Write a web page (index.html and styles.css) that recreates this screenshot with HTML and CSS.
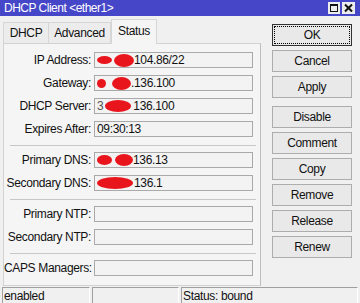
FILE: index.html
```html
<!DOCTYPE html>
<html>
<head>
<meta charset="utf-8">
<link rel="stylesheet" href="styles.css">
</head>
<body>
<div class="window">
  <div class="titlebar">
    <span class="title">DHCP Client &lt;ether1&gt;</span>
    <div class="tbtns">
      <svg class="tbtn" width="12" height="12" viewBox="0 0 12 12"><rect x="0" y="0" width="12" height="12" fill="#ececec"/><rect x="2.5" y="2.5" width="7" height="7" fill="none" stroke="#111" stroke-width="1"/><rect x="2" y="2" width="8" height="2" fill="#111"/></svg>
      <svg class="tbtn" width="13" height="12" viewBox="0 0 13 12"><rect x="0" y="0" width="13" height="12" fill="#ececec"/><path d="M3 2.5 L10 9.5 M10 2.5 L3 9.5" stroke="#111" stroke-width="2"/></svg>
    </div>
  </div>
  <div class="main">
    <div class="left">
      <div class="tabs">
        <div class="tab">DHCP</div>
        <div class="tab">Advanced</div>
        <div class="tab active">Status</div>
      </div>
      <div class="panel">
        <div class="row"><div class="label">IP Address:</div><div class="field"><span class="red r1"></span><span class="red r2"></span>104.86/22</div></div>
        <div class="row"><div class="label">Gateway:</div><div class="field"><span class="red g1"></span><span class="red g2"></span>.136.100</div></div>
        <div class="row"><div class="label">DHCP Server:</div><div class="field"><span class="faint">3</span><span class="red d1"></span>136.100</div></div>
        <div class="row"><div class="label">Expires After:</div><div class="field">09:30:13</div></div>
        <div class="sep"></div>
        <div class="row"><div class="label">Primary DNS:</div><div class="field"><span class="red p1"></span><span class="red p2"></span>136.13</div></div>
        <div class="row"><div class="label">Secondary DNS:</div><div class="field"><span class="red s1"></span>136.1</div></div>
        <div class="sep"></div>
        <div class="row"><div class="label">Primary NTP:</div><div class="field"></div></div>
        <div class="row"><div class="label">Secondary NTP:</div><div class="field"></div></div>
        <div class="sep"></div>
        <div class="row last"><div class="label">CAPS Managers:</div><div class="field"></div></div>
      </div>
    </div>
    <div class="right">
      <div class="btn ok">OK</div>
      <div class="btn">Cancel</div>
      <div class="btn">Apply</div>
      <div class="btn gap">Disable</div>
      <div class="btn">Comment</div>
      <div class="btn">Copy</div>
      <div class="btn">Remove</div>
      <div class="btn">Release</div>
      <div class="btn">Renew</div>
    </div>
  </div>
  <div class="statusbar">
    <div class="cell c1">enabled</div>
    <div class="cell c2"></div>
    <div class="cell c3">Status: bound</div>
  </div>
</div>
</body>
</html>
```
FILE: styles.css
```css
* { box-sizing: border-box; }
html, body { margin: 0; padding: 0; }
body {
  width: 360px;
  height: 303px;
  overflow: hidden;
  background: #f0f0f0;
  font-family: "Liberation Sans", Arial, sans-serif;
  font-size: 12px;
  letter-spacing: -0.35px;
  color: #111;
}
.window { width: 360px; height: 303px; display: flex; flex-direction: column; }
.titlebar {
  height: 16px;
  background: #4646c8;
  display: flex;
  align-items: center;
  justify-content: space-between;
  padding: 0 5px 0 4px;
}
.title { color: #fff; font-size: 12px; line-height: 16px; letter-spacing: -0.5px; }
.tbtns { display: flex; gap: 2px; align-items: center; margin-top: -1px; }
.tbtn { display: block; }

.main { display: flex; height: 271px; }
.left { width: 258px; margin-left: 3px; padding-top: 3px; display: flex; flex-direction: column; }
.tabs { display: flex; align-items: flex-end; height: 25px; position: relative; z-index: 1; margin-bottom: -1px; }
.tab {
  height: 21px;
  border: 1px solid #d6d6d6;
  border-bottom: none;
  background: #ececec;
  padding: 0 4px;
  display: flex;
  align-items: center;
  justify-content: center;
  margin-bottom: 1px;
  white-space: nowrap;
}
.tab:nth-child(1) { width: 46px; }
.tab:nth-child(2) { width: 62px; border-left: none; }
.tab.active {
  width: 46px;
  height: 25px;
  background: #f5f5f5;
  margin-bottom: 0;
  padding-bottom: 2px;
}
.panel {
  width: 258px;
  height: 243px;
  background: #f5f5f5;
  border: 1px solid #d2d2d2;
  border-right-color: #bdbdbd;
  padding: 8px 0 0 0;
  display: flex;
  flex-direction: column;
}
.row { display: flex; align-items: center; height: 16px; margin-bottom: 7px; }
.row.last { margin-bottom: 0; }
.label { width: 87px; text-align: right; white-space: nowrap; line-height: 16px; }
.field {
  margin-left: 3px;
  width: 159px;
  height: 16px;
  border: 1px solid #a9a9a9;
  background: #f3f3f3;
  display: flex;
  align-items: center;
  padding-left: 2px;
  line-height: 14px;
  white-space: nowrap;
}
.sep { height: 1px; background: #c8c8c8; margin: 1px 4px 6px 6px; }
.red { display: inline-block; background: #e8161c; border-radius: 50%; flex: none; }
.r1 { width: 15px; height: 8px; margin-right: 2px; }
.r2 { width: 20px; height: 13px; }
.g1 { width: 9px; height: 9px; margin-right: 6px; }
.g2 { width: 19px; height: 13px; }
.d1 { width: 26px; height: 12px; margin-left: 2px; margin-right: 2px; }
.faint { color: #555; }
.p1 { width: 15px; height: 10px; margin-right: 3px; }
.p2 { width: 18px; height: 12px; }
.s1 { width: 36px; height: 12px; margin-right: 1px; }

.right { width: 80px; margin-left: 11px; padding-top: 8px; display: flex; flex-direction: column; }
.btn {
  height: 22px;
  margin-bottom: 4px;
  border: 1px solid #adadad;
  background: #e9e9e9;
  display: flex;
  align-items: center;
  justify-content: center;
}
.btn.gap { margin-top: 4px; }
.btn.ok { border: 1px solid #333; outline: 1px dotted #000; outline-offset: -3px; }

.statusbar { height: 16px; display: flex; padding-left: 2px; }
.cell {
  height: 16px;
  border-top: 1px solid #a0a0a0;
  border-left: 1px solid #a0a0a0;
  border-right: 1px solid #fff;
  padding-left: 1px;
  line-height: 16px;
  font-size: 12px;
  overflow: hidden;
}
.c1 { width: 88px; margin-right: 2px; }
.c2 { width: 87px; margin-right: 2px; }
.c3 { width: 177px; }
```
